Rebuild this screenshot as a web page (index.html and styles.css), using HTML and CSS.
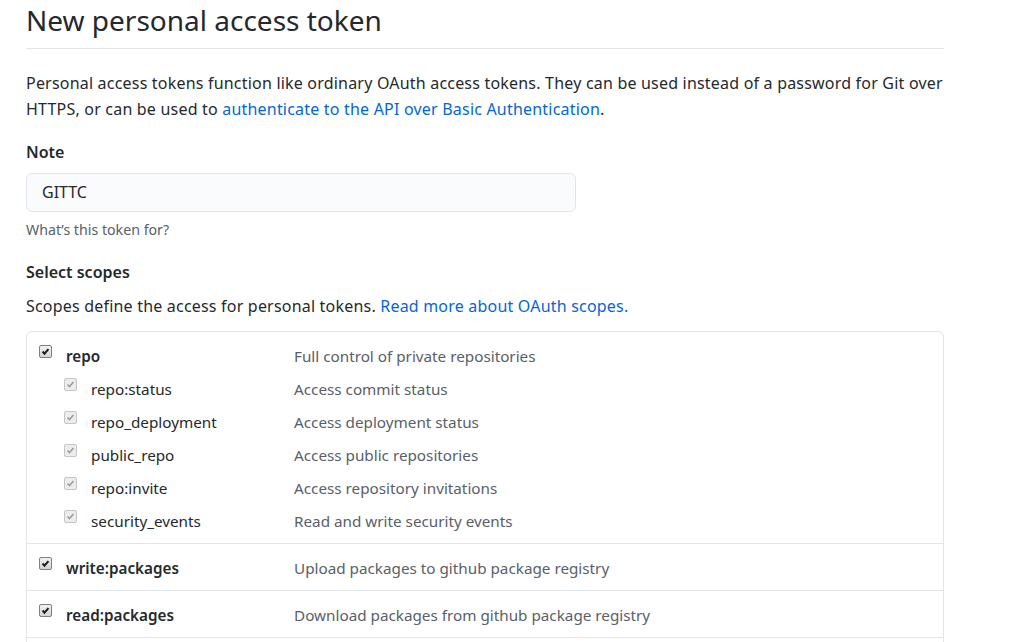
FILE: index.html
```html
<!DOCTYPE html>
<html>
<head>
<meta charset="utf-8">
<link rel="stylesheet" href="styles.css">
</head>
<body>
<div class="page">
  <h1 class="subhead">New personal access token</h1>
  <p class="intro">Personal access tokens function like ordinary OAuth access tokens. They can be used instead of a password for Git over HTTPS, or can be used to <a href="#">authenticate to the API over Basic Authentication</a>.</p>

  <div class="field">
    <label class="field-label">Note</label>
    <div class="input">GITTC</div>
    <p class="note">What’s this token for?</p>
  </div>

  <div class="field">
    <label class="field-label">Select scopes</label>
    <p class="scopes-desc">Scopes define the access for personal tokens. <a href="#">Read more about OAuth scopes.</a></p>
  </div>

  <div class="scopes">
    <div class="group">
      <div class="row parent">
        <span class="cb"><svg viewBox="0 0 13 13"><path d="M3 6.5 L5.3 9 L10 3.6" /></svg></span>
        <span class="name">repo</span>
        <span class="desc">Full control of private repositories</span>
      </div>
      <div class="row child">
        <span class="cb dis"><svg viewBox="0 0 13 13"><path d="M3 6.5 L5.3 9 L10 3.6" /></svg></span>
        <span class="name">repo:status</span>
        <span class="desc">Access commit status</span>
      </div>
      <div class="row child">
        <span class="cb dis"><svg viewBox="0 0 13 13"><path d="M3 6.5 L5.3 9 L10 3.6" /></svg></span>
        <span class="name">repo_deployment</span>
        <span class="desc">Access deployment status</span>
      </div>
      <div class="row child">
        <span class="cb dis"><svg viewBox="0 0 13 13"><path d="M3 6.5 L5.3 9 L10 3.6" /></svg></span>
        <span class="name">public_repo</span>
        <span class="desc">Access public repositories</span>
      </div>
      <div class="row child">
        <span class="cb dis"><svg viewBox="0 0 13 13"><path d="M3 6.5 L5.3 9 L10 3.6" /></svg></span>
        <span class="name">repo:invite</span>
        <span class="desc">Access repository invitations</span>
      </div>
      <div class="row child">
        <span class="cb dis"><svg viewBox="0 0 13 13"><path d="M3 6.5 L5.3 9 L10 3.6" /></svg></span>
        <span class="name">security_events</span>
        <span class="desc">Read and write security events</span>
      </div>
    </div>
    <div class="group">
      <div class="row parent">
        <span class="cb"><svg viewBox="0 0 13 13"><path d="M3 6.5 L5.3 9 L10 3.6" /></svg></span>
        <span class="name">write:packages</span>
        <span class="desc">Upload packages to github package registry</span>
      </div>
    </div>
    <div class="group">
      <div class="row parent">
        <span class="cb"><svg viewBox="0 0 13 13"><path d="M3 6.5 L5.3 9 L10 3.6" /></svg></span>
        <span class="name">read:packages</span>
        <span class="desc">Download packages from github package registry</span>
      </div>
    </div>
    <div class="group">
      <div class="row parent">
        <span class="cb"><svg viewBox="0 0 13 13"><path d="M3 6.5 L5.3 9 L10 3.6" /></svg></span>
        <span class="name">delete:packages</span>
        <span class="desc">Delete packages from github package registry</span>
      </div>
    </div>
  </div>
</div>
</body>
</html>
```

FILE: styles.css
```css
html, body {
  margin: 0;
  padding: 0;
  background: #fff;
  overflow: hidden;
  height: 642px;
}
body {
  font-family: "Noto Sans", "Open Sans", sans-serif;
  color: #24292e;
}
a {
  color: #0366d6;
  text-decoration: none;
}
.page {
  width: 918px;
  margin-left: 26px;
  margin-top: 0;
}
.subhead {
  font-weight: 400;
  font-size: 28px;
  line-height: 40px;
  margin: 0;
  padding-bottom: 8px;
  border-bottom: 1px solid #e1e4e8;
}
.intro {
  font-size: 16px;
  letter-spacing: 0.2px;
  line-height: 26px;
  margin: 21px 0 0 0;
}
.field {
  margin-top: 19px;
}
.field-label {
  display: block;
  font-weight: 600;
  font-size: 16px;
  line-height: 22px;
}
.input {
  margin-top: 10px;
  width: 533px;
  height: 37px;
  box-sizing: content-box;
  padding: 0 0 0 15px;
  background: #fafbfc;
  border: 1px solid #e1e4e8;
  border-radius: 6px;
  font-size: 16px;
  line-height: 37px;
}
.note {
  margin: 8px 0 0 0;
  font-size: 14.2px;
  line-height: 20px;
  color: #586069;
}
.field + .field {
  margin-top: 21px;
}
.scopes-desc {
  margin: 11px 0 0 0;
  font-size: 16px;
  letter-spacing: 0.2px;
  line-height: 24px;
}
.scopes {
  margin-top: 13px;
  border: 1px solid #e1e4e8;
  border-radius: 6px;
}
.group {
  padding: 7px 0 6px 0;
  border-bottom: 1px solid #e1e4e8;
}
.row {
  display: flex;
  align-items: center;
  height: 33px;
  font-size: 15.25px;
}
.row.parent {
  padding-left: 12px;
}
.row.child {
  padding-left: 37px;
}
.cb {
  display: inline-flex;
  width: 11px;
  height: 11px;
  border: 1px solid #7f8080;
  border-radius: 2px;
  background: linear-gradient(#f2f2f2, #d4d4d4);
  margin-top: -9px;
}
.cb svg {
  width: 11px;
  height: 11px;
  fill: none;
  stroke: #1e1e1e;
  stroke-width: 2.4;
}
.cb.dis {
  border-color: #c6c6c6;
  background: #ececec;
}
.cb.dis svg {
  stroke: #9b9b9b;
  stroke-width: 1.8;
}
.name {
  margin-left: 14px;
  width: 228px;
  flex: none;
}
.parent .name {
  font-weight: 600;
}
.child .name {
  width: 203px;
}
.desc {
  color: #586069;
}
```
